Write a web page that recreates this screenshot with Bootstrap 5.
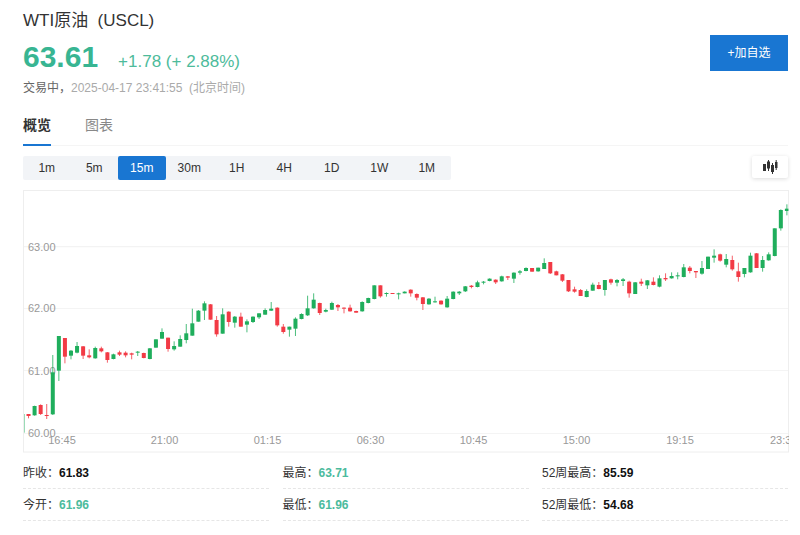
<!DOCTYPE html>
<html lang="zh">
<head>
<meta charset="utf-8">
<title>WTI原油</title>
<link href="https://cdn.jsdelivr.net/npm/bootstrap@5.3.0/dist/css/bootstrap.min.css" rel="stylesheet">
<style>
html,body{height:535px;overflow:hidden;background:#fff}
body{font-family:"Liberation Sans","Noto Sans CJK SC",sans-serif;color:#333;padding:0 12px 0 23px}
.hd-title{font-size:17px;line-height:24px;margin:9px 0 0;font-weight:400;color:#333}
.hd-price{font-size:30px;line-height:36px;font-weight:700;color:#38b592;margin-top:6px}
.hd-change{font-size:17px;line-height:20px;color:#4dbb9b;margin-left:20px}
.hd-time{font-size:12px;line-height:16px;color:#aaa;margin-top:5px}
.hd-time b{font-weight:400;color:#666}
.add-btn{width:78px;height:36px;margin-top:35px;background:#1976d2;border:0;border-radius:0;color:#fff;font-size:12px;padding:0}
.add-btn:hover{background:#1976d2;color:#fff}
.tab-row{height:36px;margin-top:14px;border-bottom:1px solid #f5f5f5;gap:34px}
.tab-item{font-size:14px;line-height:20px;color:#888;padding:5px 0 0;height:36px}
.tab-on{font-weight:700;color:#333;border-bottom:2px solid #1976d2}
.tool-row{margin-top:10px;height:34px}
.iv-group{background:#f2f4f7;height:24px;border-radius:2px}
.iv-item{width:47.5px;height:24px;line-height:24px;text-align:center;font-size:12px;color:#333;border-radius:2px}
.iv-on{background:#1976d2;color:#fff}
.kline-btn{width:36px;height:22px;background:#fff;box-shadow:0 1px 4px rgba(0,0,0,.14);border-radius:2px}
.chart-box{height:263px}
.chart-box svg{display:block}
.stat-grid{margin-top:4px;column-gap:13.5px}
.stat-cell{width:246px;height:32px;border-bottom:1px dashed #e6e6e6;font-size:12px;line-height:33px;color:#333;white-space:nowrap}
.stat-cell b{color:#111}
.stat-cell b.up{color:#4cbb9d}
.ax{font-family:"Liberation Sans",sans-serif;font-size:11px;fill:#999}
</style>
</head>
<body>
<div class="d-flex justify-content-between">
  <div>
    <h1 class="hd-title">WTI原油&nbsp;&nbsp;(USCL)</h1>
    <div class="d-flex align-items-baseline">
      <div class="hd-price">63.61</div>
      <div class="hd-change">+1.78 (+ 2.88%)</div>
    </div>
    <div class="hd-time"><b>交易中，</b>2025-04-17 23:41:55&nbsp; (北京时间)</div>
  </div>
  <button type="button" class="btn add-btn">+加自选</button>
</div>
<div class="d-flex tab-row">
  <div class="tab-item tab-on">概览</div>
  <div class="tab-item">图表</div>
</div>
<div class="d-flex justify-content-between align-items-start tool-row">
  <div class="d-flex iv-group">
    <div class="iv-item">1m</div><div class="iv-item">5m</div><div class="iv-item iv-on">15m</div><div class="iv-item">30m</div><div class="iv-item">1H</div><div class="iv-item">4H</div><div class="iv-item">1D</div><div class="iv-item">1W</div><div class="iv-item">1M</div>
  </div>
  <div class="kline-btn d-flex align-items-center justify-content-center">
    <svg width="16" height="14" viewBox="0 0 16 14" aria-hidden="true"><g fill="#333"><rect x="1" y="4" width="3" height="7"/><rect x="5" y="1.5" width="3" height="7"/><rect x="9" y="5" width="3" height="7"/><rect x="13" y="2" width="2.5" height="6"/></g><g stroke="#333" stroke-width="1"><path d="M6.5 0v11M10.5 3v11M14.2 0v10"/></g></svg>
  </div>
</div>
<div class="chart-box" id="chartBox"></div>
<div class="d-flex flex-wrap stat-grid">
  <div class="stat-cell">昨收：<b>61.83</b></div>
  <div class="stat-cell">最高：<b class="up">63.71</b></div>
  <div class="stat-cell">52周最高：<b>85.59</b></div>
  <div class="stat-cell">今开：<b class="up">61.96</b></div>
  <div class="stat-cell">最低：<b class="up">61.96</b></div>
  <div class="stat-cell">52周最低：<b>54.68</b></div>
</div>
<script src="https://cdn.jsdelivr.net/npm/bootstrap@5.3.0/dist/js/bootstrap.bundle.min.js"></script>
<script>
// candle: colour, wick top, body top, body bottom, wick bottom (3x px from base)
var A="g550,552,608,608 r552,552,558,565 g527,528,556,557 r523,525,552,555 r522,555,557,567 g375,427,553,555 g318,318,422,453 r324,324,380,400 g360,362,377,388 g336,348,368,370 r348,349,377,387 r358,376,382,385 g350,354,385,386 r350,355,364,367 r366,367,390,398 g371,373,387,388 r362,367,374,378 r364,368,376,382 r368,370,374,388 g363,365,368,378 r368,369,384,385 g354,355,387,388 g328,328,353,353 g295,306,326,326 r323,323,357,365 g334,348,358,362 g316,327,350,350 g282,310,330,340 g236,280,317,317 g240,242,275,275 g214,220,242,270 r222,223,269,269 r258,270,313,320 g235,253,311,311 r244,245,276,290 g258,260,278,293 r248,260,290,290 g268,274,284,307 g259,260,276,279 g250,250,262,267 g235,240,254,254 g216,236,242,243 r232,233,286,290 r282,290,306,311 g290,290,299,320 g262,266,296,318 g250,252,267,268 g197,235,256,258 g190,209,235,236 r218,219,249,255 g236,240,245,247 g215,219,239,240 r222,225,232,243 r232,233,235,250 r224,233,244,245 r242,243,248,248 g214,216,244,245 g203,204,219,220 g166,166,207,208 r166,166,199,203 g187,189,191,200 r189,189,191,191 g188,190,193,208 g184,185,190,190 r178,179,190,200 r190,192,203,211 r201,202,222,240 g204,206,223,224 g200,214,217,218 r211,212,223,224 g198,206,232,233 g184,185,207,208 g183,185,190,195 g168,169,184,186 r165,167,171,175 g152,157,171,172 g153,155,157,163 g145,146,153,154 r148,149,157,162 g137,139,154,155 r138,139,143,150 g127,128,146,159 g120,124,128,134 g112,114,123,124";
var B="r234,234,245,245 g233,233,244,245 g205,219,237,237 r216,216,250,252 r242,244,256,256 r252,253,272,276 r270,270,304,306 r290,298,305,308 r297,300,318,318 g298,303,321,322 g278,284,302,302 r276,285,297,298 g270,270,300,317 r266,268,278,284 g267,270,278,289 g264,268,273,288 r272,275,310,323 g276,277,312,312 r266,275,281,288 g270,271,286,297 r262,275,285,286 g256,265,290,292 r250,264,268,273 g247,258,265,266 g247,256,258,268 g222,232,261,262 r228,233,243,250 r243,243,247,264 g213,234,251,254 g200,200,237,237 g178,197,203,218 r191,193,212,215 g192,207,224,232 r197,210,238,242 r218,244,261,275 g234,234,252,262 g188,197,247,248 r189,190,234,234 g198,210,234,245 g187,193,211,212 g115,115,198,199 g58,60,115,122 g43,56,63,76";
var s='<svg width="766" height="263" viewBox="23 190 766 263" xmlns="http://www.w3.org/2000/svg" role="img">';
s+='<defs><clipPath id="plot"><rect x="24" y="191" width="764.5" height="261"/></clipPath></defs>';
s+='<rect x="23.5" y="190.5" width="765" height="261.5" fill="#fff" stroke="#eee"/>';
[246.7,308.5,370.5,433.5].forEach(function(y,i){
  s+='<line x1="24" x2="788" y1="'+y+'" y2="'+y+'" stroke="'+(i?'#f4f4f4':'#f0f0f0')+'"/>';
});
[["63.00",250.5],["62.00",312.3],["61.00",374.8],["60.00",437.3]].forEach(function(t){
  s+='<text class="ax" x="28" y="'+t[1]+'">'+t[0]+'</text>';
});
[["16:45",62],["21:00",164.5],["01:15",267.5],["06:30",370.5],["10:45",473.5],["15:00",576.5],["19:15",680]].forEach(function(t){
  s+='<text class="ax" text-anchor="middle" x="'+t[1]+'" y="444">'+t[0]+'</text>';
});
s+='<text class="ax" x="770" y="444">23:3</text>';
s+='<g clip-path="url(#plot)">';
function draw(list,base,start){
  list.split(" ").forEach(function(c,k){
    var i=start+k,col=c[0]=="g"?"#1fae5c":"#f23a45",v=c.slice(1).split(",").map(Number);
    var x=22.45+6.067*i,t=base+v[0]/3,bt=base+v[1]/3,bb=base+v[2]/3,b=base+v[3]/3;
    s+='<rect x="'+(x-.5).toFixed(2)+'" y="'+t.toFixed(2)+'" width="1" height="'+(b-t).toFixed(2)+'" fill="'+col+'" opacity=".8"/>';
    s+='<rect x="'+(x-2).toFixed(2)+'" y="'+bt.toFixed(2)+'" width="4" height="'+Math.max(bb-bt,1).toFixed(2)+'" fill="'+col+'"/>';
  });
}
draw(A,230,0);
draw(B,190,84);
s+='</g></svg>';
document.getElementById("chartBox").innerHTML=s;
</script>
</body>
</html>
